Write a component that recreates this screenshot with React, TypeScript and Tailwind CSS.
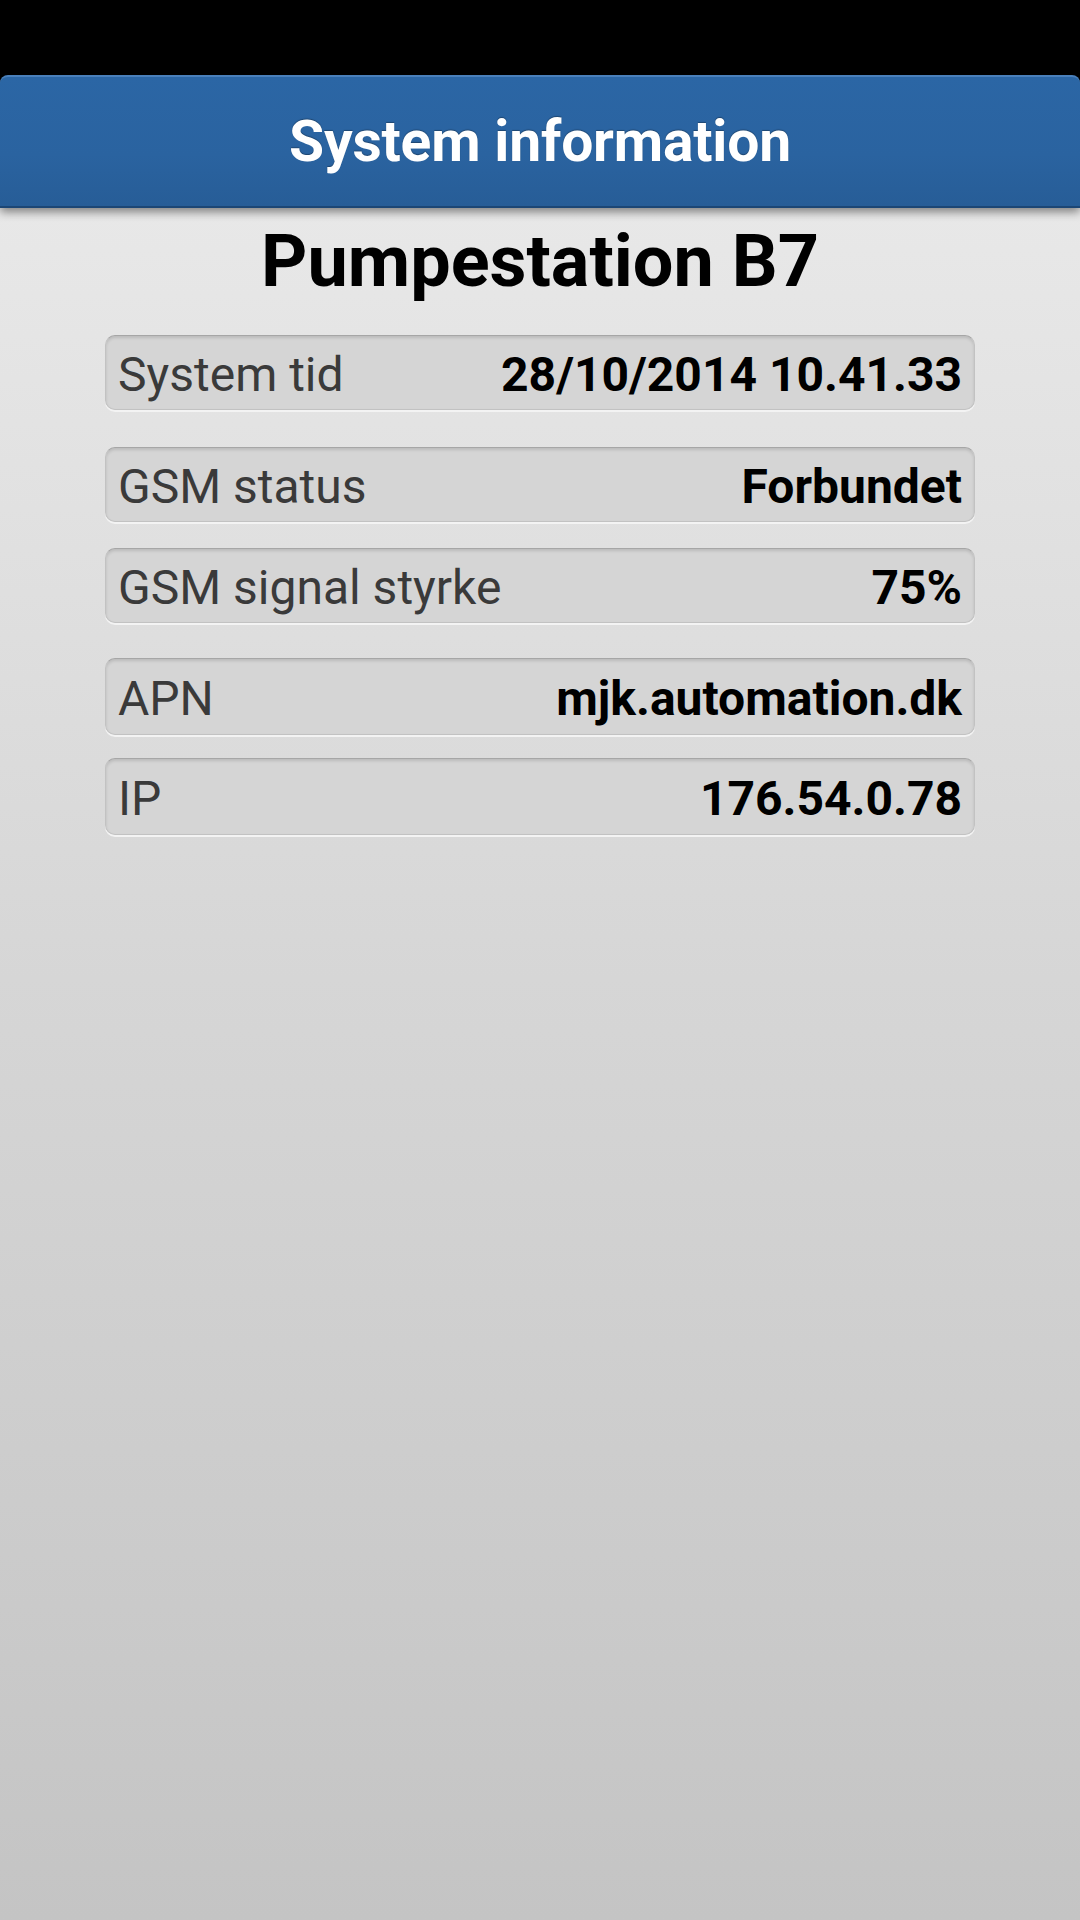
const rows = [
  { label: 'System tid', value: '28/10/2014 10.41.33', mt: 'mt-[37px]', h: 'h-[75px]' },
  { label: 'GSM status', value: 'Forbundet', mt: 'mt-[37px]', h: 'h-[75px]' },
  { label: 'GSM signal styrke', value: '75%', mt: 'mt-[26px]', h: 'h-[75px]' },
  { label: 'APN', value: 'mjk.automation.dk', mt: 'mt-[35px]', h: 'h-[77px]' },
  { label: 'IP', value: '176.54.0.78', mt: 'mt-[23px]', h: 'h-[77px]' },
]

export default function App() {
  return (
    <div className="flex h-[1920px] w-[1080px] flex-col bg-black font-['Roboto','Liberation_Sans',sans-serif]">
      {/* status bar */}
      <div className="h-[75px] shrink-0 bg-black" />

      <div className="relative z-10 flex h-[133px] shrink-0 items-center justify-center rounded-t-[8px] border-t-2 border-b-2 border-t-[#4a80bb] border-b-[#1c4675] bg-[#2a63a0] bg-[linear-gradient(180deg,#2b66a5_0%,#2a63a0_60%,#275d97_100%)] shadow-[0_4px_10px_rgba(0,0,0,0.45)]">
        <h1 className="text-[57px] font-bold leading-none tracking-[-0.2px] text-white [text-shadow:0_-1px_1px_rgba(0,0,0,0.3)]">System information</h1>
      </div>

      <div className="flex flex-1 flex-col items-center bg-[linear-gradient(180deg,#e8e8e8_0%,#d6d6d6_45%,#c4c4c4_100%)]">
        <h2 className="mt-[18px] text-[72px] font-bold leading-[72px] text-black">Pumpestation B7</h2>

        {rows.map((r) => (
          <div
            key={r.label}
            className={`${r.mt} ${r.h} flex w-[870px] items-center justify-between rounded-[10px] border border-[#c2c2c2] border-t-[#a6a6a6] bg-[#d5d5d5] px-[12px] pt-[5px] shadow-[0_2px_0_#f3f3f3,inset_0_2px_3px_rgba(0,0,0,0.12)]`}
          >
            <span className="text-[48px] leading-none text-[#3a3a3a]">{r.label}</span>
            <span className="text-[48px] font-bold leading-none text-black">{r.value}</span>
          </div>
        ))}
      </div>
    </div>
  )
}
